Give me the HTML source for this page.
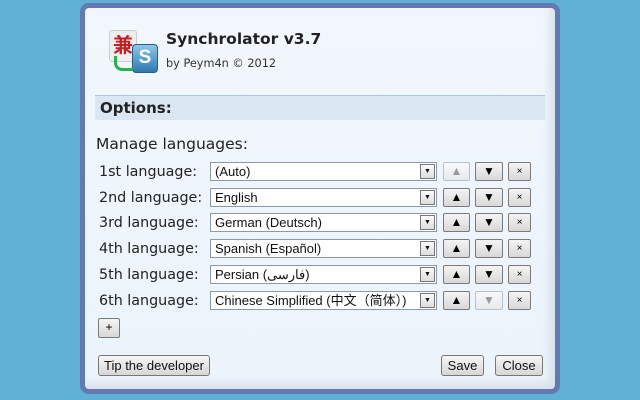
<!DOCTYPE html><html><head><style>
body{margin:0;width:640px;height:400px;background:#5fb0d4;position:relative;overflow:hidden;font-family:"Liberation Sans",sans-serif}
.frame{position:absolute;left:80px;top:3px;width:470px;height:381px;border:5px solid #6478b2;border-radius:9px;background:linear-gradient(#f2f7fd,#ebf3fb);box-shadow:inset -6px -6px 8px rgba(200,210,220,.5)}
.a{position:absolute}
.lbl{position:absolute;left:99px;font-size:14.3px;color:#222;font-family:"DejaVu Sans",sans-serif;margin-top:2px}
.sel{position:absolute;left:210px;width:221px;height:17px;border:1px solid #8a9aaa;background:#fff;font-size:13px;line-height:17px;padding-left:4px;box-sizing:content-box;color:#111}
.sel .dd{position:absolute;right:1px;top:1px;width:13px;height:13px;border:1px solid #777;background:linear-gradient(#fafafa,#ddd);font-size:7px;line-height:13px;text-align:center}
.b{position:absolute;height:17px;border:1px solid #7a7a7a;border-radius:2px;background:linear-gradient(#f4f4f4,#d8d8d8);font-size:12px;line-height:17px;text-align:center;color:#000}
.b.dis{border-color:#b8c0c8;color:#999;background:linear-gradient(#f6f8fa,#e6eaee)}
.btn{position:absolute;height:19px;border:1px solid #777;border-radius:3px;background:linear-gradient(#f6f6f6,#d6d6d6);font-size:13px;line-height:19px;text-align:center;color:#111}
</style></head><body>
<div class="frame"></div>
<div class="a" style="left:109px;top:30px;width:26px;height:30px;background:#eee;border:1px solid #ccc;border-radius:3px;color:#c02020;font:bold 20px 'Noto Sans CJK SC',sans-serif;line-height:26px;text-align:center">兼</div>
<div class="a" style="left:132px;top:44px;width:24px;height:27px;background:linear-gradient(#8ec6ea,#2f78b0);border:1px solid #2a5d8a;border-radius:4px;color:#fff;font:bold 19px 'Liberation Sans';line-height:26px;text-align:center">S</div>
<div class="a" style="left:114px;top:56px;width:16px;height:12px;border:3px solid #29b050;border-top:none;border-right:none;border-radius:0 0 0 8px"></div>
<div class="a" style="left:166px;top:30px;font:bold 15.5px 'DejaVu Sans',sans-serif;color:#222">Synchrolator v3.7</div>
<div class="a" style="left:166px;top:57px;font:11.3px 'DejaVu Sans',sans-serif;color:#333">by Peym4n © 2012</div>
<div class="a" style="left:95px;top:95px;width:450px;height:24px;background:#dae6f2;border-top:1px solid #a8c4e0"></div>
<div class="a" style="left:100px;top:99px;font:bold 15px 'DejaVu Sans',sans-serif;color:#222">Options:</div>
<div class="lbl" style="top:133px;font-size:15.5px;left:96px">Manage languages:</div>

<div class="lbl" style="top:162px">1st language:</div>
<div class="sel" style="top:162px">(Auto)<div class="dd">▼</div></div>
<div class="b dis" style="left:443px;top:162px;width:25px">▲</div><div class="b" style="left:475px;top:162px;width:26px">▼</div><div class="b" style="left:508px;top:162px;width:21px;font-size:10px">×</div>

<div class="lbl" style="top:188px">2nd language:</div>
<div class="sel" style="top:188px">English<div class="dd">▼</div></div>
<div class="b" style="left:443px;top:188px;width:25px">▲</div><div class="b" style="left:475px;top:188px;width:26px">▼</div><div class="b" style="left:508px;top:188px;width:21px;font-size:10px">×</div>

<div class="lbl" style="top:213px">3rd language:</div>
<div class="sel" style="top:213px">German (Deutsch)<div class="dd">▼</div></div>
<div class="b" style="left:443px;top:213px;width:25px">▲</div><div class="b" style="left:475px;top:213px;width:26px">▼</div><div class="b" style="left:508px;top:213px;width:21px;font-size:10px">×</div>

<div class="lbl" style="top:239px">4th language:</div>
<div class="sel" style="top:239px">Spanish (Español)<div class="dd">▼</div></div>
<div class="b" style="left:443px;top:239px;width:25px">▲</div><div class="b" style="left:475px;top:239px;width:26px">▼</div><div class="b" style="left:508px;top:239px;width:21px;font-size:10px">×</div>

<div class="lbl" style="top:265px">5th language:</div>
<div class="sel" style="top:265px">Persian (فارسی)<div class="dd">▼</div></div>
<div class="b" style="left:443px;top:265px;width:25px">▲</div><div class="b" style="left:475px;top:265px;width:26px">▼</div><div class="b" style="left:508px;top:265px;width:21px;font-size:10px">×</div>

<div class="lbl" style="top:291px">6th language:</div>
<div class="sel" style="top:291px;font-family:'Liberation Sans','Noto Sans CJK SC',sans-serif">Chinese Simplified (中文（简体）)<div class="dd">▼</div></div>
<div class="b" style="left:443px;top:291px;width:25px">▲</div><div class="b dis" style="left:475px;top:291px;width:26px">▼</div><div class="b" style="left:508px;top:291px;width:21px;font-size:10px">×</div>

<div class="b" style="left:98px;top:318px;width:20px;height:18px">+</div>
<div class="btn" style="left:98px;top:355px;width:110px">Tip the developer</div>
<div class="btn" style="left:441px;top:355px;width:41px">Save</div>
<div class="btn" style="left:495px;top:355px;width:46px">Close</div>
</body></html>
